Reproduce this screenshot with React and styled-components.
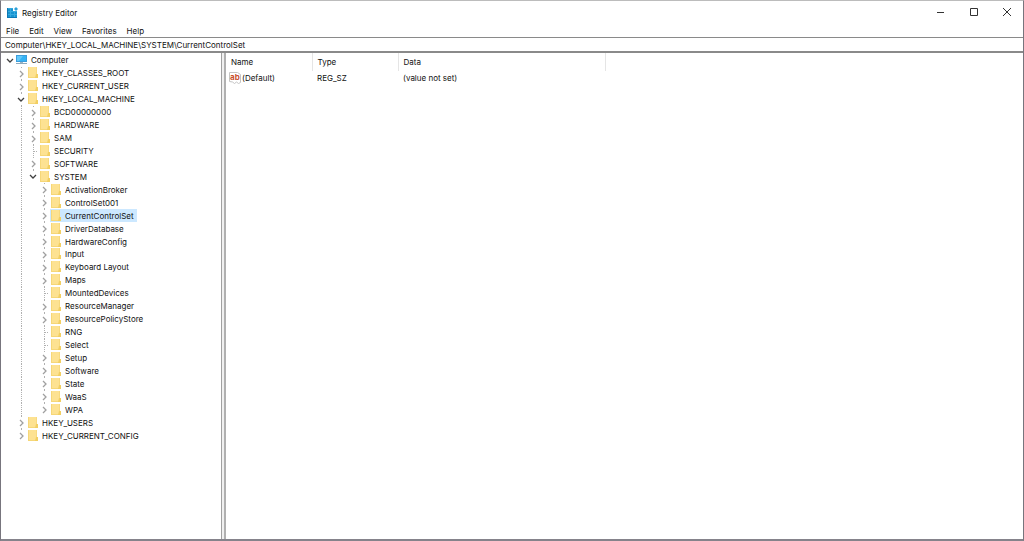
import React, { useState } from "react";
import styled, { createGlobalStyle } from "styled-components";

const menu = ["File", "Edit", "View", "Favorites", "Help"];

const keys = [
  { name: "Computer", depth: 0, state: "open", last: true },
  { name: "HKEY_CLASSES_ROOT", depth: 1, state: "closed" },
  { name: "HKEY_CURRENT_USER", depth: 1, state: "closed" },
  { name: "HKEY_LOCAL_MACHINE", depth: 1, state: "open" },
  { name: "BCD00000000", depth: 2, state: "closed" },
  { name: "HARDWARE", depth: 2, state: "closed" },
  { name: "SAM", depth: 2, state: "closed" },
  { name: "SECURITY", depth: 2, state: "leaf" },
  { name: "SOFTWARE", depth: 2, state: "closed" },
  { name: "SYSTEM", depth: 2, state: "open", last: true },
  { name: "ActivationBroker", depth: 3, state: "closed" },
  { name: "ControlSet001", depth: 3, state: "closed" },
  { name: "CurrentControlSet", depth: 3, state: "closed" },
  { name: "DriverDatabase", depth: 3, state: "closed" },
  { name: "HardwareConfig", depth: 3, state: "closed" },
  { name: "Input", depth: 3, state: "closed" },
  { name: "Keyboard Layout", depth: 3, state: "closed" },
  { name: "Maps", depth: 3, state: "closed" },
  { name: "MountedDevices", depth: 3, state: "leaf" },
  { name: "ResourceManager", depth: 3, state: "closed" },
  { name: "ResourcePolicyStore", depth: 3, state: "closed" },
  { name: "RNG", depth: 3, state: "leaf" },
  { name: "Select", depth: 3, state: "leaf" },
  { name: "Setup", depth: 3, state: "closed" },
  { name: "Software", depth: 3, state: "closed" },
  { name: "State", depth: 3, state: "closed" },
  { name: "WaaS", depth: 3, state: "closed" },
  { name: "WPA", depth: 3, state: "closed", last: true },
  { name: "HKEY_USERS", depth: 1, state: "closed" },
  { name: "HKEY_CURRENT_CONFIG", depth: 1, state: "closed", last: true },
];

const values = [{ name: "(Default)", type: "REG_SZ", data: "(value not set)" }];

const AppIcon = () => (
  <svg width="12" height="12" viewBox="0 0 12 12" aria-hidden="true">
    <path d="M0 1h6v3h4v7H0z" fill="#1793cf" />
    <path d="M0 1h6v1H0zM0 4h10v1H0zM0 7h10v1H0zM3 1h1v10H3zM7 4h1v7H7z" fill="#36a9de" />
    <path d="M0 1h1v10H0zM1 10h9v1H1z" fill="#0d78b4" />
    <path d="M9 0l2 2-2 2-2-2z" fill="#2b9fd8" />
  </svg>
);

const ComputerIcon = () => (
  <svg width="13" height="12" viewBox="0 0 13 12" aria-hidden="true">
    <path d="M0 1h11v7H0z" fill="#3b9ddb" />
    <path d="M1 2h9v5H1z" fill="#35b3f4" />
    <path d="M1 2h6L3 7H1z" fill="#63c8fa" />
    <path d="M4 8h3v1H4z" fill="#9db4c4" />
    <path d="M0 9.5h11" stroke="#8fa9bb" />
  </svg>
);

const FolderIcon = () => (
  <svg width="13" height="12" viewBox="0 0 13 12" aria-hidden="true">
    <path d="M1 0h9v7h1v4H1z" fill="#fde292" />
    <path d="M1 0h1v11H1zM1 10h10v1H1z" fill="#f6d778" />
    <path d="M9 7h2v4H8z" fill="#f2cf62" />
    <path d="M9 0h1v7H9z" fill="#f8da80" />
  </svg>
);

const StringIcon = () => (
  <svg width="12" height="12" viewBox="0 0 12 12" aria-hidden="true">
    <path d="M.5.5h8l3 2v8l-2 1-2-1.5-2 1.5-2-1.5-3-.5z" fill="#fff" stroke="#c4c4c4" />
    <text x="1" y="8" fontSize="8" fontWeight="700" fill="#c8502d">
      ab
    </text>
  </svg>
);

const Branch = ({ state, depth, last }) => (
  <svg width="12" height="13" viewBox="0 0 12 13" aria-hidden="true">
    {state === "leaf" ? (
      <path d="M6.5 0v13M7 6.5h4" stroke="#b0b0b0" strokeDasharray="1 1" />
    ) : (
      <>
        {depth > 0 && <path d="M6 0h1v1H6z" fill="#b0b0b0" />}
        {!last && <path d="M6 12h1v1H6z" fill="#b0b0b0" />}
      </>
    )}
    {state === "open" && (
      <path d="M3 5l3 3 3-3" fill="none" stroke="#404040" strokeWidth="1.3" />
    )}
    {state === "closed" && (
      <path d="M5 4l3 3-3 3" fill="none" stroke="#a0a0a0" strokeWidth="1.3" />
    )}
  </svg>
);

export default function App() {
  const [selected, setSelected] = useState("CurrentControlSet");

  return (
    <>
      <GlobalStyle />
      <Window>
        <TitleBar>
          <AppIcon />
          <Title>Registry Editor</Title>
          <Controls>
            <ControlButton aria-label="Minimize">
              <svg width="10" height="10" viewBox="0 0 10 10">
                <path d="M1 4.5h7" stroke="#333" />
              </svg>
            </ControlButton>
            <ControlButton aria-label="Maximize">
              <svg width="10" height="10" viewBox="0 0 10 10">
                <path d="M1.5.5h7v7h-7z" fill="none" stroke="#333" />
              </svg>
            </ControlButton>
            <ControlButton aria-label="Close">
              <svg width="10" height="10" viewBox="0 0 10 10">
                <path d="M1 0l8 8M9 0L1 8" stroke="#333" />
              </svg>
            </ControlButton>
          </Controls>
        </TitleBar>

        <MenuBar>
          {menu.map((item) => (
            <MenuButton key={item}>{item}</MenuButton>
          ))}
        </MenuBar>

        <Address
          aria-label="Address"
          defaultValue="Computer\HKEY_LOCAL_MACHINE\SYSTEM\CurrentControlSet"
        />

        <Panes>
          <TreePane>
            <Tree role="tree" aria-label="Registry keys">
              {keys.map((key) => (
                <TreeRow
                  key={key.name}
                  role="treeitem"
                  aria-level={key.depth + 1}
                  aria-selected={selected === key.name}
                >
                  {Array.from({ length: key.depth }, (_, level) => (
                    <Guide key={level} $wide={level % 2 === 1} $line={level === 1} />
                  ))}
                  <Branch {...key} />
                  <KeyButton
                    $selected={selected === key.name}
                    onClick={() => setSelected(key.name)}
                  >
                    {key.depth === 0 ? <ComputerIcon /> : <FolderIcon />}
                    {key.name}
                  </KeyButton>
                </TreeRow>
              ))}
            </Tree>
          </TreePane>

          <ValuePane>
            <ValueTable>
              <thead>
                <tr>
                  <HeadCell $width="86px">Name</HeadCell>
                  <HeadCell $width="86px">Type</HeadCell>
                  <HeadCell $width="207px">Data</HeadCell>
                </tr>
              </thead>
              <tbody>
                {values.map((value) => (
                  <tr key={value.name}>
                    <Cell>
                      <ValueName>
                        <StringIcon />
                        {value.name}
                      </ValueName>
                    </Cell>
                    <Cell>{value.type}</Cell>
                    <Cell>{value.data}</Cell>
                  </tr>
                ))}
              </tbody>
            </ValueTable>
          </ValuePane>
        </Panes>
      </Window>
    </>
  );
}

const GlobalStyle = createGlobalStyle`
  * {
    box-sizing: border-box;
  }
  body {
    margin: 0;
    background: #fff;
    color: #111;
    font: 8px/12px Inter, "Noto Sans", sans-serif;
  }
  button, input {
    margin: 0;
    border: 0;
    padding: 0;
    background: none;
    color: inherit;
    font: inherit;
  }
  svg {
    display: block;
    flex: none;
  }
`;
const Window = styled.div`
  display: flex;
  flex-direction: column;
  min-height: 100vh;
  border: 1px solid #77757d;
  border-top-color: #bcbcbc;
  border-bottom: 2px solid #85838b;
`;
const TitleBar = styled.header`
  display: flex;
  align-items: center;
  height: 23px;
  padding-left: 6px;
`;
const Title = styled.h1`
  flex: 1;
  margin: 0 0 0 3px;
  font-size: 8px;
  font-weight: 400;
`;
const Controls = styled.div`
  display: flex;
`;
const ControlButton = styled.button`
  display: flex;
  align-items: center;
  justify-content: center;
  width: 33px;
  height: 22px;
`;
const MenuBar = styled.nav`
  display: flex;
  align-items: center;
  gap: 10px;
  height: 13px;
  padding-left: 5px;
`;
const MenuButton = styled.button`
  line-height: 12px;
`;
const Address = styled.input`
  width: 100%;
  height: 16px;
  padding: 0 4px;
  border: solid #8a8a8a;
  border-width: 1px 0 2px;
  background: #fff;
`;
const Panes = styled.main`
  display: flex;
  flex: 1;
  background: #f0f0f0;
`;
const TreePane = styled.section`
  width: 221px;
  border-right: 1px solid #a0a0a0;
  background: #fff;
`;
const Tree = styled.ul`
  display: grid;
  grid-auto-rows: 1fr;
  height: 389px;
  margin: 0;
  padding: 1px 0 0 3px;
  list-style: none;
`;
const TreeRow = styled.li`
  display: flex;
  min-height: 0;
`;
const Guide = styled.span`
  flex: none;
  width: ${(props) => (props.$wide ? "12px" : "11px")};
  background: ${(props) =>
    props.$line
      ? "repeating-linear-gradient(#b0b0b0 0 1px, transparent 1px 2px) 6px 0 / 1px 100% no-repeat"
      : "none"};
`;
const KeyButton = styled.button`
  display: flex;
  align-items: center;
  gap: 2px;
  padding-right: 3px;
  background: ${(props) => (props.$selected ? "#cce8ff" : "none")};
  white-space: nowrap;
`;
const ValuePane = styled.section`
  flex: 1;
  margin-left: 2px;
  border-left: 2px solid #b0b0b0;
  background: #fff;
`;
const ValueTable = styled.table`
  table-layout: fixed;
  width: 379px;
  border-collapse: collapse;
`;
const HeadCell = styled.th`
  width: ${(props) => props.$width};
  height: 18px;
  padding: 0 0 0 5px;
  border-right: 1px solid #e5e5e5;
  font-weight: 400;
  text-align: left;
`;
const Cell = styled.td`
  height: 14px;
  padding: 0 0 0 5px;
  &:first-child {
    padding-left: 3px;
  }
`;
const ValueName = styled.div`
  display: flex;
  align-items: center;
  gap: 1px;
`;
